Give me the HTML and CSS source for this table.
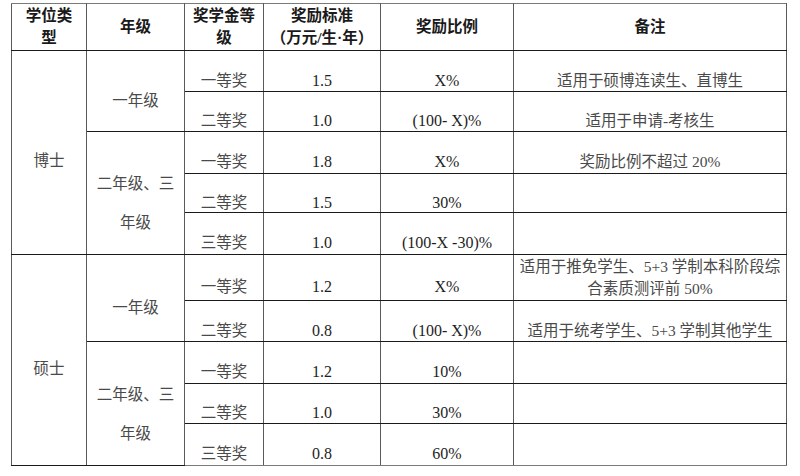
FILE: index.html
```html
<!DOCTYPE html>
<html lang="zh-CN">
<head>
<meta charset="utf-8">
<title>奖学金标准</title>
<link rel="stylesheet" href="styles.css">
</head>
<body>
<div class="page">
<table class="grid">
  <colgroup>
    <col class="c1"><col class="c2"><col class="c3"><col class="c4"><col class="c5"><col class="c6">
  </colgroup>
  <thead>
    <tr class="h47">
      <th class="hd">学位类<br>型</th>
      <th class="hd">年级</th>
      <th class="hd">奖学金等<br>级</th>
      <th class="hd">奖励标准<br>（万元/生·年）</th>
      <th class="hd">奖励比例</th>
      <th class="hd">备注</th>
    </tr>
  </thead>
  <tbody>
    <tr class="h41">
      <td rowspan="5" class="cell deg">博士</td>
      <td rowspan="2" class="cell">一年级</td>
      <td class="cell">一等奖</td>
      <td class="cell num">1.5</td>
      <td class="cell num">X%</td>
      <td class="cell">适用于硕博连读生、直博生</td>
    </tr>
    <tr class="h40">
      <td class="cell">二等奖</td>
      <td class="cell num">1.0</td>
      <td class="cell num">(100- X)%</td>
      <td class="cell">适用于申请-考核生</td>
    </tr>
    <tr class="h42">
      <td rowspan="3" class="cell multi">二年级、三<br>年级</td>
      <td class="cell">一等奖</td>
      <td class="cell num">1.8</td>
      <td class="cell num">X%</td>
      <td class="cell">奖励比例不超过 20%</td>
    </tr>
    <tr class="h39">
      <td class="cell">二等奖</td>
      <td class="cell num">1.5</td>
      <td class="cell num">30%</td>
      <td class="cell"></td>
    </tr>
    <tr class="h42">
      <td class="cell">三等奖</td>
      <td class="cell num">1.0</td>
      <td class="cell num">(100-X -30)%</td>
      <td class="cell"></td>
    </tr>
    <tr class="h46">
      <td rowspan="5" class="cell deg">硕士</td>
      <td rowspan="2" class="cell">一年级</td>
      <td class="cell">一等奖</td>
      <td class="cell num">1.2</td>
      <td class="cell num">X%</td>
      <td class="cell two">适用于推免学生、5+3 学制本科阶段综<br>合素质测评前 50%</td>
    </tr>
    <tr class="h41">
      <td class="cell">二等奖</td>
      <td class="cell num">0.8</td>
      <td class="cell num">(100- X)%</td>
      <td class="cell">适用于统考学生、5+3 学制其他学生</td>
    </tr>
    <tr class="h42">
      <td rowspan="3" class="cell multi">二年级、三<br>年级</td>
      <td class="cell">一等奖</td>
      <td class="cell num">1.2</td>
      <td class="cell num">10%</td>
      <td class="cell"></td>
    </tr>
    <tr class="h40">
      <td class="cell">二等奖</td>
      <td class="cell num">1.0</td>
      <td class="cell num">30%</td>
      <td class="cell"></td>
    </tr>
    <tr class="h42">
      <td class="cell">三等奖</td>
      <td class="cell num">0.8</td>
      <td class="cell num">60%</td>
      <td class="cell"></td>
    </tr>
  </tbody>
</table>
</div>
</body>
</html>
```

FILE: styles.css
```css
html, body {
  margin: 0;
  padding: 0;
  background: #ffffff;
}

.page {
  padding: 3px 0 0 11px;
}

.grid {
  border-collapse: collapse;
  table-layout: fixed;
  width: 775px;
  font-family: "Liberation Serif", "Noto Sans CJK SC", serif;
  font-size: 15.5px;
  color: #4a4a4a;
  border: 1px solid #7a7a7a;
}

.c1 { width: 75px; }
.c2 { width: 98px; }
.c3 { width: 79px; }
.c4 { width: 117px; }
.c5 { width: 133px; }
.c6 { width: 273px; }

.h47 { height: 47px; }
.h46 { height: 46px; }
.h42 { height: 42px; }
.h41 { height: 41px; }
.h40 { height: 40px; }
.h39 { height: 39px; }

.grid th,
.grid td {
  border-left: 1px solid #5a5a5a;
  border-right: 1px solid #5a5a5a;
  border-top: 1px solid #1a1a1a;
  border-bottom: 1px solid #1a1a1a;
  padding: 0;
  text-align: center;
  vertical-align: middle;
}

.grid thead th {
  border-top: 1px solid #7a7a7a;
}

.grid tr:last-child td {
  border-bottom: 1px solid #7a7a7a;
}

.grid .hd {
  font-weight: 700;
  color: #1a1a1a;
  line-height: 22px;
}

.grid .cell {
  padding-top: 19px;
  line-height: 18px;
}

.grid .num {
  color: #1e1e1e;
  font-size: 16px;
}

.grid .deg {
  padding-top: 17px;
}

.grid .multi {
  padding-top: 20px;
  line-height: 39px;
}

.grid .cell.two {
  padding-top: 0;
  line-height: 22px;
}
```
